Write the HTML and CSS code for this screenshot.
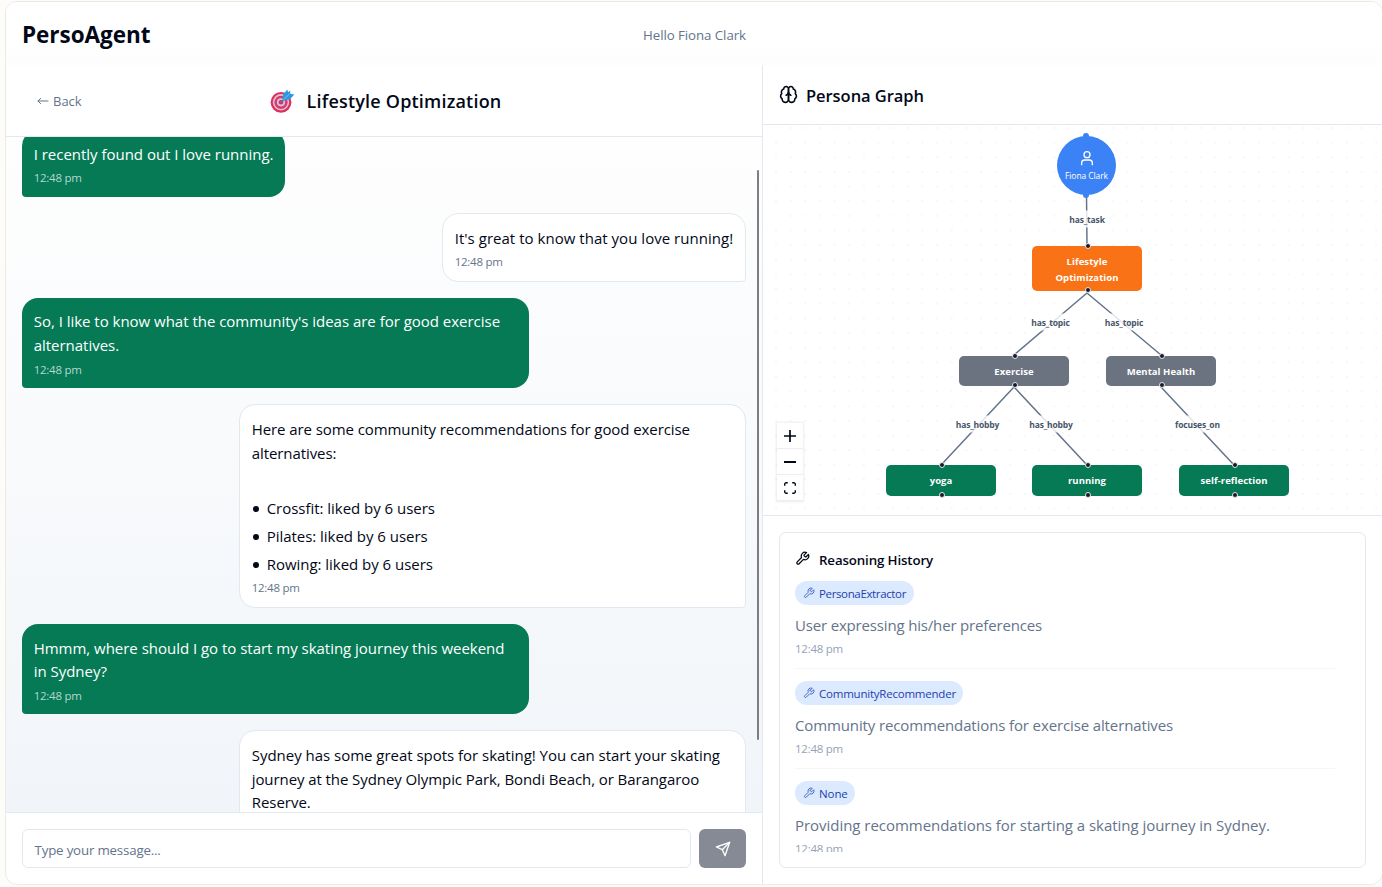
FILE: index.html
```html
<!DOCTYPE html>
<html lang="en">
<head>
<meta charset="utf-8">
<title>PersoAgent</title>
<link rel="stylesheet" href="styles.css">
</head>
<body>
<svg class="defs" aria-hidden="true">
  <symbol id="wrench" viewBox="0 0 24 24"><path d="M14.7 6.3a1 1 0 0 0 0 1.4l1.6 1.6a1 1 0 0 0 1.4 0l3.77-3.77a6 6 0 0 1-7.94 7.94l-6.91 6.91a2.12 2.12 0 0 1-3-3l6.91-6.91a6 6 0 0 1 7.94-7.94l-3.76 3.76z"/></symbol>
</svg>
<div class="app">
  <header class="topbar">
    <h1 class="brand">PersoAgent</h1>
    <span class="greeting">Hello Fiona Clark</span>
  </header>
  <div class="columns">
    <section class="chat">
      <div class="chat-header">
        <a class="back"><svg class="back-arrow" viewBox="0 0 11 8"><path d="M11 4H1M3.600 1.400 1 4l2.600 2.600"/></svg>Back</a>
        <div class="chat-title">
          <svg class="target" viewBox="0 0 24 24">
            <circle cx="11" cy="13.300" r="10.400" fill="#dd2e5c"/>
            <circle cx="11" cy="13.300" r="8.200" fill="#d9c3d8"/>
            <circle cx="11" cy="13.300" r="6.600" fill="#e0376a"/>
            <circle cx="11" cy="13.300" r="4.100" fill="#d5c2da"/>
            <circle cx="11" cy="13.300" r="2.300" fill="#cf2f63"/>
            <path d="M11.200 13.200 18 6.400" stroke="#4d7fa8" stroke-width="1.500"/>
            <path d="M12.400 9.800 13.200 5.400 17.300.6l.8 2.700 2-1.800.3 3.200 3.900.9-3.800 4.200-4.800 1.500-2.600.8z" fill="#2f97e0"/>
            <path d="M13.800 10.400 19.500 4.900" stroke="#7cc4f5" stroke-width="1"/>
          </svg>
          <h2>Lifestyle Optimization</h2>
        </div>
      </div>
      <div class="messages">
        <div class="thread">
          <div class="bubble user short"><p>I recently found out I love running.</p><time>12:48 pm</time></div>
          <div class="bubble agent medium"><p>It's great to know that you love running!</p><time>12:48 pm</time></div>
          <div class="bubble user"><p>So, I like to know what the community's ideas are for good exercise<br>alternatives.</p><time>12:48 pm</time></div>
          <div class="bubble agent">
            <p class="tight">Here are some community recommendations for good exercise<br>alternatives:</p>
            <ul><li>Crossfit: liked by 6 users</li><li>Pilates: liked by 6 users</li><li>Rowing: liked by 6 users</li></ul>
            <time>12:48 pm</time>
          </div>
          <div class="bubble user"><p>Hmmm, where should I go to start my skating journey this weekend<br>in Sydney?</p><time>12:48 pm</time></div>
          <div class="bubble agent"><p>Sydney has some great spots for skating! You can start your skating<br><span class="tight">journey at the Sydney Olympic Park, Bondi Beach, or Barangaroo</span><br>Reserve.</p><time>12:48 pm</time></div>
        </div>
        <div class="scroll-thumb"></div>
      </div>
      <div class="composer">
        <div class="input">Type your message...</div>
        <button class="send"><svg viewBox="0 0 24 24"><path d="m22 2-7 20-4-9-9-4Z"/><path d="M22 2 11 13"/></svg></button>
      </div>
    </section>
    <aside class="side">
      <div class="graph-header">
        <svg class="brain" viewBox="0 0 24 24"><path d="M12 5a3 3 0 1 0-5.997.125 4 4 0 0 0-2.526 5.770 4 4 0 0 0 .556 6.588A4 4 0 1 0 12 18Z"/><path d="M12 5a3 3 0 1 1 5.997.125 4 4 0 0 1 2.526 5.770 4 4 0 0 1-.556 6.588A4 4 0 1 1 12 18Z"/><path d="M15 13a4.500 4.500 0 0 1-3-4 4.500 4.500 0 0 1-3 4"/></svg>
        <h3>Persona Graph</h3>
      </div>
      <div class="graph">
        <svg class="edges" viewBox="0 0 619 390">
          <path d="M323.500 70 324 121"/>
          <path d="M324 168 251 230M324 168 398 230"/>
          <path d="M251 262 178 340M251 262 324 340M398 262 471 340"/>
        </svg>
        <span class="edge-label" style="left:324px;top:94px">has_task</span>
        <span class="edge-label" style="left:287.500px;top:197px">has_topic</span>
        <span class="edge-label" style="left:361px;top:197px">has_topic</span>
        <span class="edge-label" style="left:214.500px;top:299px">has_hobby</span>
        <span class="edge-label" style="left:288px;top:299px">has_hobby</span>
        <span class="edge-label" style="left:434.500px;top:299px">focuses_on</span>
        <div class="person" style="left:294px;top:10.500px">
          <svg viewBox="0 0 24 24"><circle cx="12" cy="7" r="4.500"/><path d="M4 22v-2.500a4.500 4.500 0 0 1 4.500-4.500h7a4.500 4.500 0 0 1 4.500 4.500V22"/></svg>
          <span>Fiona Clark</span>
        </div>
        <div class="node task" style="left:269px;top:121px">Lifestyle<br>Optimization</div>
        <div class="node topic" style="left:196px;top:231px">Exercise</div>
        <div class="node topic" style="left:343px;top:231px">Mental Health</div>
        <div class="node leaf" style="left:123px;top:340px">yoga</div>
        <div class="node leaf" style="left:269px;top:340px">running</div>
        <div class="node leaf" style="left:416px;top:340px">self-reflection</div>
        <div class="controls">
          <button><svg viewBox="0 0 12 12"><path d="M6 0v12M0 6h12" stroke-width="1.700"/></svg></button>
          <button><svg viewBox="0 0 12 12"><path d="M0 6h12" stroke-width="2"/></svg></button>
          <button><svg viewBox="0 0 12 12"><path d="M.7 3.800V2.200a1.500 1.500 0 0 1 1.500-1.500h1.600M8.200.7h1.600a1.500 1.500 0 0 1 1.500 1.500v1.600M11.300 8.200v1.600a1.500 1.500 0 0 1-1.500 1.500H8.200M3.800 11.300H2.200a1.500 1.500 0 0 1-1.500-1.500V8.200" stroke-width="1.400"/></svg></button>
        </div>
      </div>
      <div class="reasoning">
        <div class="card">
          <h4><svg class="wrench"><use href="#wrench"/></svg>Reasoning History</h4>
          <div class="history">
            <article><span class="badge b1"><svg><use href="#wrench"/></svg>PersonaExtractor</span><p class="r1">User expressing his/her preferences</p><time>12:48 pm</time></article>
            <article><span class="badge b2"><svg><use href="#wrench"/></svg>CommunityRecommender</span><p class="r2">Community recommendations for exercise alternatives</p><time>12:48 pm</time></article>
            <article><span class="badge b3"><svg><use href="#wrench"/></svg>None</span><p class="r3">Providing recommendations for starting a skating journey in Sydney.</p><time>12:48 pm</time></article>
          </div>
        </div>
      </div>
    </aside>
  </div>
</div>
</body>
</html>
```
FILE: styles.css
```css
* { box-sizing: border-box; margin: 0; padding: 0; }
body { width: 1382px; height: 887px; padding: 1px 0 0 5px; overflow: hidden; background: #fdfcf8; color: #020817; font-family: "Open Sans", "Noto Sans", sans-serif; }
svg { display: block; fill: none; stroke: currentColor; stroke-width: 2; stroke-linecap: round; stroke-linejoin: round; overflow: visible; }
button { font: inherit; border: 0; color: inherit; }
p, li, time, h1, h2, h3, h4, span { white-space: nowrap; }
.defs { position: absolute; width: 0; height: 0; }

.app { display: flex; flex-direction: column; width: 1378px; height: 884px; background: #fff; border: 1px solid #ebeae4; border-radius: 12px; overflow: hidden; }
.topbar { display: grid; grid-template-columns: 621px 1fr; align-items: center; height: 63px; padding: 3px 16px 0; background: linear-gradient(#fff 60%, #fdfdfd); }
.brand { font-size: 22.5px; font-weight: 700; line-height: 32px; letter-spacing: -0.04px; }
.greeting { font-size: 13.3px; letter-spacing: -0.07px; color: #64748b; line-height: 20px; }
.columns { display: flex; flex: 1; min-height: 0; }

.chat { display: flex; flex-direction: column; width: 757px; border-right: 1px solid #e2e8f0; }
.chat-header { display: grid; grid-template-columns: 248px 1fr; align-items: center; height: 72px; padding: 1px 0 0 16px; border-bottom: 1px solid #e2e8f0; flex: none; }
.back { display: flex; align-items: center; gap: 5px; padding-left: 15px; font-size: 13px; color: #64748b; line-height: 20px; }
.back-arrow { width: 11px; height: 8px; stroke-width: 1; }
.chat-title { display: flex; align-items: center; gap: 12.5px; }
.target { width: 24px; height: 24px; stroke: none; }
.chat-title h2 { font-size: 18px; font-weight: 600; letter-spacing: 0.2px; line-height: 28px; }

.messages { position: relative; flex: 1; min-height: 0; overflow: hidden; background: linear-gradient(#fefefe, #f1f5f9); }
.thread { display: flex; flex-direction: column; gap: 16px; padding: 0 16px; margin-top: -7px; }
.bubble { width: 507px; flex: none; padding: 12.7px 11.7px 10.6px; font-size: 15px; line-height: 23.6px; letter-spacing: -0.02px; }
.bubble.user { align-self: flex-start; background: #057a55; color: #fff; border-radius: 16px 16px 16px 4px; }
.bubble.agent { align-self: flex-end; background: #fff; color: #020817; border: 1px solid #e2e8f0; border-radius: 16px 16px 4px 16px; }
.bubble.short { width: 263px; }
.bubble.medium { width: 304px; letter-spacing: 0.03px; }
.bubble .tight { letter-spacing: -0.08px; }
.bubble time { display: block; margin-top: 4px; font-size: 11.5px; line-height: 16px; letter-spacing: -0.25px; color: #64748b; }
.bubble.user time { color: #b4d7cc; }
.bubble ul { list-style: none; margin-top: 29.7px; letter-spacing: -0.03px; }
.bubble ul + time { margin-top: 1.5px; }
.bubble li { display: flex; align-items: center; gap: 8px; height: 28px; padding-left: 1px; }
.bubble li::before { content: ""; width: 6px; height: 6px; border-radius: 50%; background: #020817; }
.scroll-thumb { position: absolute; left: 751px; top: 33px; width: 2px; height: 570px; border-radius: 1px; background: #7d7d82; }

.composer { display: flex; gap: 8px; flex: none; height: 72px; padding: 16px; border-top: 1px solid #e2e8f0; }
.input { display: flex; align-items: center; flex: 1; height: 39px; padding: 3px 0 0 11.5px; border: 1px solid #e2e8f0; border-radius: 6px; font-size: 13.3px; letter-spacing: -0.18px; color: #64748b; }
.send { display: grid; place-items: center; width: 47px; height: 39px; border-radius: 6px; background: #868a94; color: #fff; }
.send svg { width: 16px; height: 16px; stroke-width: 2; }

.side { display: flex; flex-direction: column; flex: 1; min-width: 0; }
.graph-header { display: flex; align-items: center; gap: 7px; flex: none; height: 60px; padding: 0 16px; border-bottom: 1px solid #e2e8f0; }
.brain { width: 19px; height: 19px; }
.graph-header h3 { font-size: 16.5px; font-weight: 600; letter-spacing: -0.05px; line-height: 24px; padding: 2px 0 0 1px; }
.graph { position: relative; flex: none; height: 391px; border-bottom: 1px solid #e2e8f0; background: radial-gradient(circle at 1px 1px, #f6f6f8 0.7px, transparent 0.9px) 12px 2px / 14.65px 14.65px; }
.edges { position: absolute; left: 0; top: 0; width: 619px; height: 390px; color: #64748b; stroke-width: 1.5px; }
.edge-label { position: absolute; transform: translate(-50%, -50%); padding: 0 1px; background: rgba(255, 255, 255, 0.8); color: #475569; font-size: 8.5px; letter-spacing: -0.15px; line-height: 17px; font-weight: 700; }
.person { position: absolute; display: flex; flex-direction: column; align-items: center; width: 59px; height: 59px; padding-top: 14px; border-radius: 50%; background: #3b82f6; color: #fff; }
.person::before, .person::after { content: ""; position: absolute; left: 26px; width: 6px; height: 6px; border-radius: 50%; background: #3b82f6; }
.person::before { top: -3px; }
.person::after { bottom: -3px; }
.person svg { width: 16px; height: 16px; }
.person span { font-size: 8.5px; line-height: 12px; letter-spacing: -0.09px; padding-top: 4px; }
.node { position: absolute; display: flex; align-items: center; justify-content: center; text-align: center; width: 110px; padding-top: 1px; border-radius: 5px; color: #fff; font-size: 9.5px; font-weight: 700; line-height: 16px; letter-spacing: 0.06px; }
.node::before, .node::after { content: ""; position: absolute; left: 53px; width: 4px; height: 4px; border-radius: 50%; background: #1a192b; border: 0.5px solid #e5e7eb; }
.node::before { top: -3px; }
.node::after { bottom: -2px; }
.task { height: 45px; padding-top: 2px; background: #f97316; }
.topic { height: 30px; background: #6b7280; }
.leaf { height: 31px; background: #057a55; }
.controls { position: absolute; left: 14px; top: 298px; width: 26px; box-shadow: 0 0 2px 1px rgba(0, 0, 0, 0.08); }
.controls button { display: grid; place-items: center; width: 26px; height: 26px; background: #fff; border-bottom: 1px solid #eee; }
.controls svg { width: 12px; height: 12px; stroke-linecap: butt; }

.reasoning { flex: 1; min-height: 0; padding: 16px; }
.card { display: flex; flex-direction: column; width: 587px; height: 336px; padding: 15px 30px 15px 15px; border: 1px solid #e2e8f0; border-radius: 7px; }
.card h4 { display: flex; align-items: center; gap: 8px; height: 24px; font-size: 13.3px; font-weight: 600; letter-spacing: -0.13px; flex: none; }
.wrench { width: 15px; height: 15px; margin: -3px 1px 0 0; }
.history { flex: 1; min-height: 0; margin-top: 9px; overflow: hidden; }
.history article { height: 88px; border-bottom: 1px solid #f3f5f8; margin-bottom: 12px; }
.badge { display: flex; align-items: center; gap: 4px; height: 24px; padding: 1px 8px 0; border-radius: 12px; background: #dbeafe; color: #1e40af; font-size: 11.5px; }
.badge svg { width: 12px; height: 12px; margin-top: -2px; stroke-width: 1.5; }
.b1 { width: 119px; letter-spacing: -0.36px; }
.b2 { width: 168px; letter-spacing: -0.22px; }
.b3 { width: 60px; letter-spacing: -0.1px; }
.history p { margin-top: 8px; font-size: 15px; line-height: 24px; color: #64748b; }
.r1 { letter-spacing: -0.17px; }
.r2 { letter-spacing: -0.125px; }
.r3 { letter-spacing: -0.035px; }
.history time { display: block; margin-top: 4px; font-size: 11.5px; line-height: 16px; letter-spacing: -0.25px; color: #94a3b8; }
```
